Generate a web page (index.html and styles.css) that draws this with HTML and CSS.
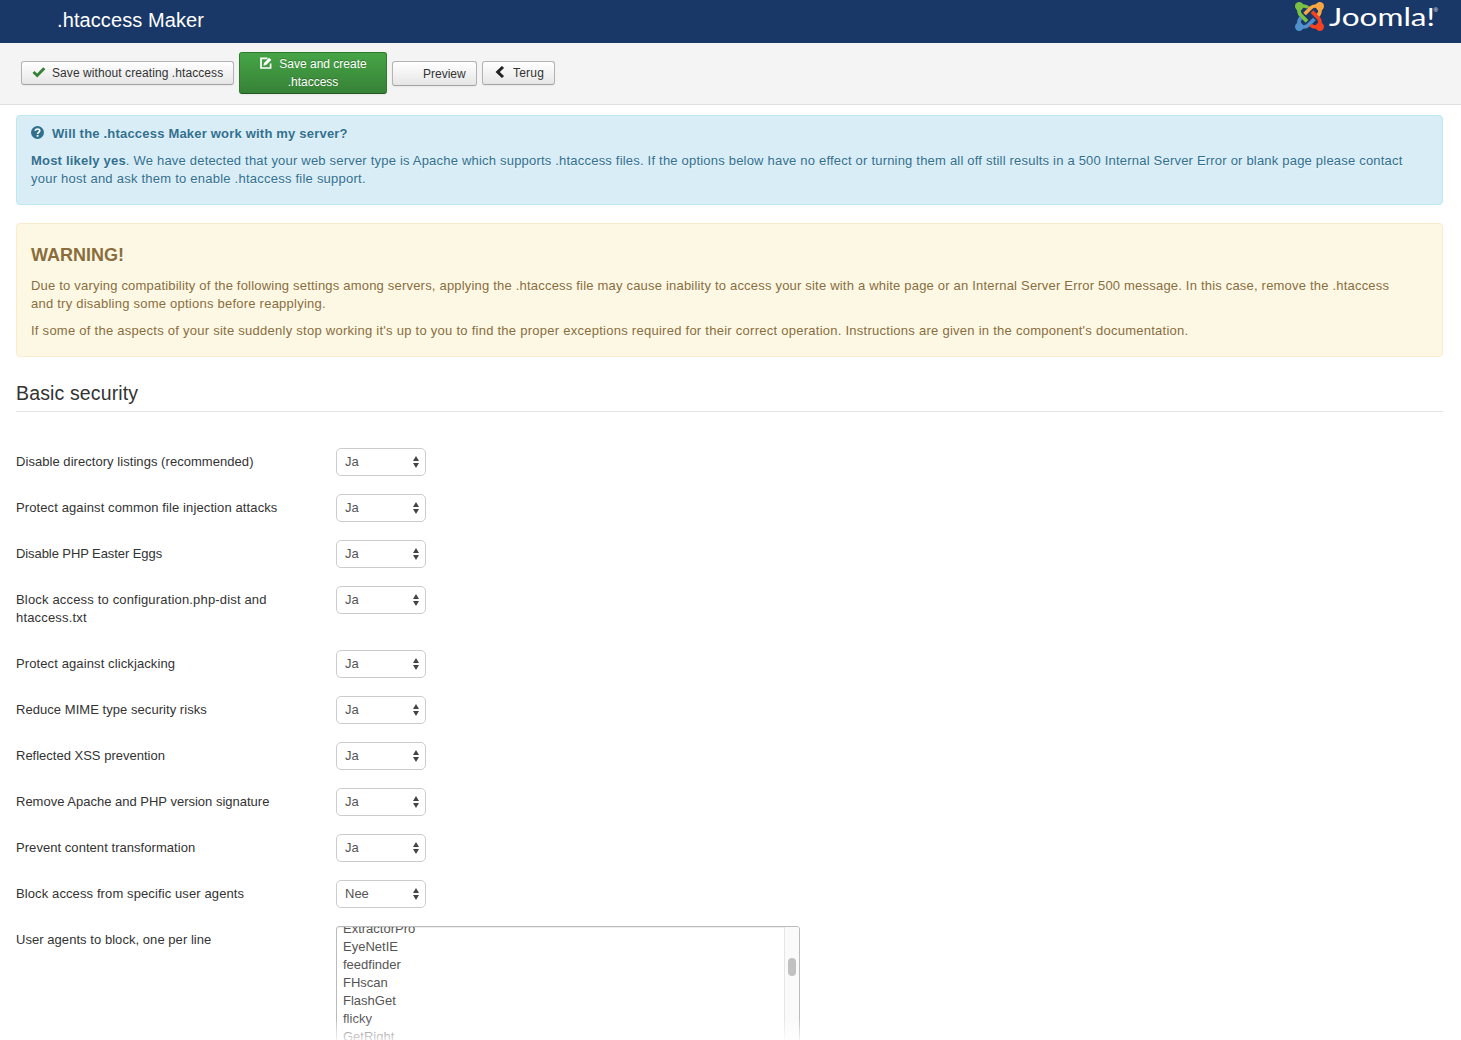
FILE: index.html
```html
<!DOCTYPE html>
<html lang="nl">
<head>
<meta charset="utf-8">
<title>.htaccess Maker</title>
<link rel="stylesheet" href="styles.css">
</head>
<body>
<header class="header">
  <h1 class="page-title">.htaccess Maker</h1>
  <svg class="logo" width="146" height="32" viewBox="0 0 146 32" role="img" aria-label="Joomla!">
    <defs>
      <g id="arm">
        <path class="gap" d="M7.6 14.9L11.6 18.9" fill="none" stroke-width="5"/>
        <circle cx="4.2" cy="4.2" r="4.2" stroke="none"/>
        <path d="M4.6 5C3.2 9.4 3.8 11.2 6 13.4L12 19.4" fill="none" stroke-width="3.7"/>
        <path d="M5 4.6C9.4 3.2 11.2 3.8 13.4 6" fill="none" stroke-width="3.7"/>
      </g>
    </defs>
    <g transform="translate(0 2)">
      <use href="#arm" class="green"/>
      <use href="#arm" class="blue" transform="rotate(270 14.5 14.5)"/>
      <use href="#arm" class="red" transform="rotate(180 14.5 14.5)"/>
      <use href="#arm" class="orange" transform="rotate(90 14.5 14.5)"/>
    </g>
    <text class="wordmark" x="34" y="25.5" textLength="106" lengthAdjust="spacingAndGlyphs">Joomla!</text>
    <text class="registered" x="138.5" y="12">®</text>
  </svg>
</header>
<nav class="toolbar">
  <button class="btn save"><svg width="14" height="12" viewBox="0 0 14 12"><path d="M1.5 6L5.2 9.5L12.3 2.2" fill="none" stroke="#378137" stroke-width="2.9"/></svg><span>Save without creating .htaccess</span></button>
  <button class="btn primary"><svg width="12" height="12" viewBox="0 0 12 12"><path d="M7.5 1.4H1V11H10.6V6.5" fill="none" stroke="#fff" stroke-width="1.7"/><path d="M3.4 8.7L4 6L9.2.8L11.3 2.9L6.1 8.1Z" fill="#fff"/></svg><span>Save and create</span><br>.htaccess</button>
  <button class="btn preview"><span>Preview</span></button>
  <button class="btn back"><svg width="10" height="12" viewBox="0 0 10 12"><path d="M8 1L2.7 6L8 11" fill="none" stroke="#222" stroke-width="3"/></svg><span>Terug</span></button>
</nav>
<main class="content">
  <section class="alert info">
    <h2 class="question"><svg width="13" height="13" viewBox="0 0 13 13"><circle cx="6.5" cy="6.5" r="6.5" fill="#31708f"/><path d="M4.3 4.8C4.4 2.4 8.8 2.4 8.8 4.8C8.8 6.3 6.6 6.2 6.6 8" fill="none" stroke="#fff" stroke-width="1.7"/><path d="M5.7 9H7.5V10.7H5.7Z" fill="#fff"/></svg><span>Will the .htaccess Maker work with my server?</span></h2>
    <p><span class="i1"><strong>Most likely yes</strong>. We have detected that your web server type is Apache which supports .htaccess files. If the options below have no effect or turning them all off still results in a 500 Internal Server Error or blank page please contact</span><br><span class="i2">your host and ask them to enable .htaccess file support.</span></p>
  </section>
  <section class="alert warning">
    <h2 class="warning-title">WARNING!</h2>
    <p><span class="w1">Due to varying compatibility of the following settings among servers, applying the .htaccess file may cause inability to access your site with a white page or an Internal Server Error 500 message. In this case, remove the .htaccess</span><br><span class="w2">and try disabling some options before reapplying.</span></p>
    <p><span class="w3">If some of the aspects of your site suddenly stop working it's up to you to find the proper exceptions required for their correct operation. Instructions are given in the component's documentation.</span></p>
  </section>
  <h2 class="legend">Basic security</h2>
  <form class="settings">
    <svg class="defs" width="0" height="0"><defs><path id="arrows" d="M3 0L6 5H0ZM0 7H6L3 12Z"/></defs></svg>
    <div class="row snug"><label>Disable directory listings (recommended)</label><div class="select">Ja<svg width="6" height="12"><use href="#arrows"/></svg></div></div>
    <div class="row loose"><label>Protect against common file injection attacks</label><div class="select">Ja<svg width="6" height="12"><use href="#arrows"/></svg></div></div>
    <div class="row tight"><label>Disable PHP Easter Eggs</label><div class="select">Ja<svg width="6" height="12"><use href="#arrows"/></svg></div></div>
    <div class="row wide"><label>Block access to configuration.php-dist and<br>htaccess.txt</label><div class="select">Ja<svg width="6" height="12"><use href="#arrows"/></svg></div></div>
    <div class="row loose"><label>Protect against clickjacking</label><div class="select">Ja<svg width="6" height="12"><use href="#arrows"/></svg></div></div>
    <div class="row snug"><label>Reduce MIME type security risks</label><div class="select">Ja<svg width="6" height="12"><use href="#arrows"/></svg></div></div>
    <div class="row"><label>Reflected XSS prevention</label><div class="select">Ja<svg width="6" height="12"><use href="#arrows"/></svg></div></div>
    <div class="row"><label>Remove Apache and PHP version signature</label><div class="select">Ja<svg width="6" height="12"><use href="#arrows"/></svg></div></div>
    <div class="row snug"><label>Prevent content transformation</label><div class="select">Ja<svg width="6" height="12"><use href="#arrows"/></svg></div></div>
    <div class="row loose"><label>Block access from specific user agents</label><div class="select">Nee<svg width="6" height="12"><use href="#arrows"/></svg></div></div>
    <div class="row snug"><label>User agents to block, one per line</label>
      <div class="agents">
        <div class="agent-list"><div>ExtractorPro</div><div>EyeNetIE</div><div>feedfinder</div><div>FHscan</div><div>FlashGet</div><div>flicky</div><div>GetRight</div></div>
        <div class="scrollbar"><div class="thumb"></div></div>
      </div>
    </div>
  </form>
</main>
<div class="fade"></div>
</body>
</html>
```

FILE: styles.css
```css
* { box-sizing: border-box; }
html { height: 100%; overflow: hidden; }
body {
  margin: 0;
  height: 1040px;
  overflow: hidden;
  position: relative;
  background: #fff;
  color: #333;
  font: 13px/18px "Liberation Sans", Arial, sans-serif;
}
h1, h2, p { margin: 0; }
.header {
  height: 43px;
  padding: 0 20px 0 57px;
  background: #1a3867;
  display: flex;
  justify-content: space-between;
  align-items: flex-start;
}
.page-title { font-size: 20px; line-height: 40px; font-weight: 400; color: #fff; letter-spacing: .1px; }
.logo { overflow: visible; }
.green { fill: #7ac143; stroke: #7ac143; }
.orange { fill: #f9a541; stroke: #f9a541; }
.red { fill: #f44321; stroke: #f44321; }
.blue { fill: #5091cd; stroke: #5091cd; }
.gap { stroke: #1a3867; }
.wordmark { font: 25px "Lato", sans-serif; fill: #fff; }
.registered { font: 6px "Liberation Sans", sans-serif; fill: #fff; }
.toolbar {
  height: 62px;
  background: #f4f4f4;
  border-bottom: 1px solid #e0e0e0;
  padding: 9px 0 0 21px;
  display: flex;
  align-items: flex-start;
  gap: 5px;
}
.btn {
  height: 24px;
  margin: 9px 0 0;
  padding: 0;
  border: 1px solid #b3b3b3;
  border-bottom-color: #a2a2a2;
  border-radius: 3px;
  background: linear-gradient(#fff, #e6e6e6);
  box-shadow: 0 1px 2px rgba(0, 0, 0, .05);
  color: #333;
  font: 12px/18px "Liberation Sans", Arial, sans-serif;
  white-space: nowrap;
  text-align: left;
}
.btn svg { vertical-align: -1px; }
.save { width: 213px; padding-left: 10px; letter-spacing: .08px; }
.save svg { margin-right: 6px; }
.primary {
  width: 148px;
  height: 42px;
  margin-top: 0;
  border-color: #2f7a2f #2f7a2f #1f5a1f;
  background: linear-gradient(#46a546, #378137);
  color: #fff;
  text-align: center;
  text-shadow: 0 -1px 0 rgba(0, 0, 0, .25);
}
.primary svg { margin-right: 7px; margin-left: 1px; }
.preview { width: 85px; height: 25px; padding-left: 30px; padding-top: 1px; }
.back { width: 73px; padding-left: 12px; letter-spacing: .2px; }
.back svg { margin-right: 8px; }
.content { padding: 10px 18px 0 16px; white-space: nowrap; }
.alert { border: 1px solid; border-radius: 4px; padding: 8px 14px; margin-bottom: 18px; text-shadow: 0 1px 0 rgba(255, 255, 255, .5); }
.alert p { margin-bottom: 9px; }
.info { height: 90px; padding-top: 9px; background: #d9edf7; border-color: #bce8f1; color: #31708f; }
.question { font-size: 13px; line-height: 18px; margin: 0 0 9px; display: flex; gap: 8px; letter-spacing: .2px; }
.question svg { margin-top: 1px; }
.i1 { letter-spacing: .203px; }
.i2, .w2 { letter-spacing: .235px; }
.w1 { letter-spacing: .199px; }
.w3 { letter-spacing: .26px; }
.warning { height: 134px; background: #fcf8e3; border-color: #faebcc; color: #8a6d3b; }
.warning-title { font-size: 18px; line-height: 18px; margin: 14px 0 13px; }
.legend { height: 37px; font-size: 19.5px; line-height: 36px; font-weight: 400; letter-spacing: .14px; border-bottom: 1px solid #e5e5e5; }
.settings { padding-top: 36px; }
.defs { display: block; }
.row { display: grid; grid-template-columns: 320px auto; justify-content: start; align-items: start; margin-bottom: 18px; }
.row label { padding-top: 5px; }
.row label:has(br) { padding-bottom: 5px; }
.snug label { letter-spacing: .05px; }
.loose label { letter-spacing: .11px; }
.wide label { letter-spacing: .17px; }
.tight label { letter-spacing: -.08px; }
.select {
  width: 90px;
  height: 28px;
  border: 1px solid #ccc;
  border-radius: 5px;
  padding: 0 6px 0 8px;
  display: flex;
  align-items: center;
  justify-content: space-between;
  color: #555;
}
.select svg { fill: #444; }
.agents {
  width: 464px;
  height: 130px;
  border: 1px solid #bbb;
  border-radius: 3px;
  overflow: hidden;
  display: flex;
  justify-content: space-between;
  color: #555;
  box-shadow: inset 0 1px 1px rgba(0, 0, 0, .075);
}
.agent-list { margin-top: -7px; padding-left: 6px; }
.scrollbar { width: 15px; background: #fafafa; border-left: 1px solid #e5e5e5; padding: 31px 3px; }
.thumb { width: 8px; height: 18px; border-radius: 4px; background: #c1c1c1; }
.fade { position: absolute; left: 0; right: 0; bottom: 0; height: 22px; background: linear-gradient(rgba(255, 255, 255, 0), rgba(255, 255, 255, .8)); }
```
